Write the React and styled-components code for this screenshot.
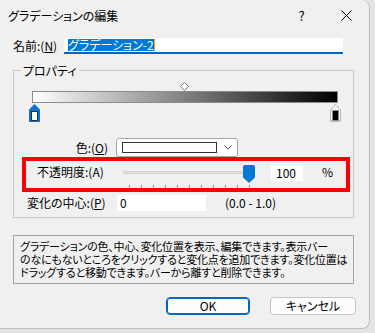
import React from "react";
import styled, { createGlobalStyle } from "styled-components";

const GlobalStyle = createGlobalStyle`
  html, body { margin: 0; padding: 0; background: #e4e4e4; }
  body {
    font-family: "Noto Sans CJK JP", "Noto Sans", sans-serif;
    font-size: 12px;
    color: #000;
  }
  * { box-sizing: border-box; }
`;

const Window = styled.div`
  width: 370px;
  height: 329px;
  background: #f0f0f0;
  border-right: 1px solid #bdbdbd;
  border-bottom: 1px solid #bdbdbd;
  border-radius: 0 8px 8px 0;
  display: flex;
  flex-direction: column;
  font-feature-settings: "palt";
  line-height: 14px;
`;

const TitleBar = styled.div`
  height: 31px;
  display: flex;
  align-items: center;
  padding-left: 8px;
`;

const TitleText = styled.div`
  flex: 1;
  font-size: 12px;
`;

const CaptionButton = styled.div`
  width: 45px;
  height: 31px;
  display: flex;
  align-items: center;
  justify-content: center;
  font-size: 13px;
`;

const Body = styled.div`
  display: flex;
  flex-direction: column;
  padding: 0 15px 0 13px;
`;

const NameRow = styled.div`
  margin-top: 7px;
  height: 16px;
  display: flex;
  align-items: center;
`;

const Label = styled.div`
  width: ${(p) => p.$w || "auto"};
  margin-left: ${(p) => p.$ml || "0px"};
  text-align: ${(p) => (p.$right ? "right" : "left")};
  white-space: nowrap;
`;

const Key = styled.span`
  text-decoration: underline;
  text-underline-offset: 1px;
`;

const NameInput = styled.div`
  width: 279px;
  height: 16px;
  background: #fff;
  border-bottom: 2px solid #0067c0;
  padding-left: 4px;
  display: flex;
  align-items: center;
`;

const Selection = styled.span`
  background: #0078d7;
  color: #fff;
  line-height: 12px;
  white-space: nowrap;
`;

const Caret = styled.span`
  width: 1px;
  height: 12px;
  background: #f7941d;
`;

const GroupBox = styled.div`
  position: relative;
  margin-top: 16px;
  height: 148px;
  border: 1px solid #c9c9c9;
  display: flex;
  flex-direction: column;
`;

const Legend = styled.div`
  position: absolute;
  top: -7px;
  left: 7px;
  padding: 0 2px;
  background: #f0f0f0;
  line-height: 14px;
`;

const GradientArea = styled.div`
  margin: 11px 0 0 18px;
  width: 306px;
  display: flex;
  flex-direction: column;
`;

const Diamond = styled.svg`
  display: block;
  margin-left: 148px;
`;

const GradientBar = styled.div`
  height: 12px;
  border: 1px solid #8c8c8c;
  background: linear-gradient(to right, #ffffff, #000000);
`;

const StopsRow = styled.div`
  margin: 1px -3px 0;
  height: 18px;
  display: flex;
  justify-content: space-between;
`;

const ColorRow = styled.div`
  margin-top: 16px;
  height: 19px;
  display: flex;
  align-items: center;
`;

const Combo = styled.div`
  margin-left: 8px;
  width: 122px;
  height: 19px;
  background: #fff;
  border: 1px solid #a6a6a6;
  border-radius: 3px;
  display: flex;
  align-items: center;
  padding: 0 5px;
`;

const Swatch = styled.div`
  width: 95px;
  height: 11px;
  background: #fff;
  border: 1px solid #333;
`;

const Chevron = styled.svg`
  margin-left: auto;
  display: block;
`;

const Highlight = styled.div`
  margin-left: 8px;
  width: 328px;
  height: 35px;
  border: 4px solid #ff0000;
  display: flex;
  align-items: flex-start;
`;

const HLabel = styled.div`
  margin: 4px 0 0 11px;
  width: 86px;
  white-space: nowrap;
`;

const Slider = styled.div`
  position: relative;
  width: 132px;
  height: 27px;
`;

const Track = styled.div`
  position: absolute;
  left: 0;
  right: 5px;
  top: 10px;
  height: 3px;
  background: #e6e6e6;
  border: 1px solid #d2d2d2;
`;

const Ticks = styled.div`
  position: absolute;
  left: 6px;
  top: 24px;
  width: 121px;
  height: 3px;
  display: flex;
  justify-content: space-between;
`;

const Tick = styled.div`
  width: 1px;
  height: 3px;
  background: #9a9a9a;
`;

const Thumb = styled.svg`
  position: absolute;
  left: 120px;
  top: 4px;
  display: block;
`;

const TextBox = styled.div`
  width: ${(p) => p.$w};
  height: 16px;
  margin-left: ${(p) => p.$ml || "0px"};
  margin-top: ${(p) => p.$mt || "0px"};
  background: #fff;
  padding-left: ${(p) => p.$pl || "3px"};
  display: flex;
  align-items: center;
`;

const Unit = styled.div`
  margin: 4px 0 0 19px;
`;

const CenterRow = styled.div`
  margin-top: 3px;
  height: 16px;
  display: flex;
  align-items: center;
`;

const RangeText = styled.div`
  margin-left: 19px;
  white-space: nowrap;
`;

const DescBox = styled.div`
  margin-top: 17px;
  height: 49px;
  border: 1px solid #a3a3a3;
  padding: 4px 6px;
  font-size: 11px;
  letter-spacing: -0.2px;
  line-height: 13px;
  white-space: nowrap;
  overflow: hidden;
`;

const ButtonRow = styled.div`
  margin: 13px -2px 0 0;
  display: flex;
  justify-content: flex-end;
  gap: 20px;
`;

const Button = styled.div`
  width: ${(p) => p.$w};
  height: 18px;
  border-radius: 4px;
  background: #fdfdfd;
  border: 1px solid ${(p) => (p.$primary ? "#0067c0" : "#c4c4c4")};
  box-shadow: ${(p) => (p.$primary ? "inset 0 0 0 1px #0067c0" : "none")};
  display: flex;
  align-items: center;
  justify-content: center;
`;

const LeftStop = () => (
  <svg width="11" height="18" viewBox="0 0 11 18">
    <path d="M5.5 0 L11 5.5 V18 H0 V5.5 Z" fill="#0a74d6" />
    <rect x="2.5" y="7.5" width="6" height="9" fill="#fff" stroke="#2b2b2b" />
  </svg>
);

const RightStop = () => (
  <svg width="11" height="18" viewBox="0 0 11 18">
    <path d="M5.5 0.5 L10.5 5.5 V17.5 H0.5 V5.5 Z" fill="#eeeeee" stroke="#8a8a8a" strokeDasharray="1 1" />
    <rect x="2.5" y="6.5" width="6" height="10" fill="#000" stroke="#8a8a8a" />
  </svg>
);

export default function App() {
  const ticks = Array.from({ length: 11 }, (_, i) => i);
  return (
    <>
      <GlobalStyle />
      <Window>
        <TitleBar>
          <TitleText>グラデーションの編集</TitleText>
          <CaptionButton>?</CaptionButton>
          <CaptionButton>
            <svg width="11" height="11" viewBox="0 0 11 11">
              <path d="M0.5 0.5 L10.5 10.5 M10.5 0.5 L0.5 10.5" stroke="#000" strokeWidth="1" />
            </svg>
          </CaptionButton>
        </TitleBar>
        <Body>
          <NameRow>
            <Label $w="51px">
              名前:(<Key>N</Key>)
            </Label>
            <NameInput>
              <Selection>グラデーション-2</Selection>
              <Caret />
            </NameInput>
          </NameRow>

          <GroupBox>
            <Legend>プロパティ</Legend>
            <GradientArea>
              <Diamond width="9" height="9" viewBox="0 0 9 9">
                <path d="M4.5 0.5 L8.5 4.5 L4.5 8.5 L0.5 4.5 Z" fill="#fff" stroke="#7a7a7a" />
              </Diamond>
              <GradientBar />
              <StopsRow>
                <LeftStop />
                <RightStop />
              </StopsRow>
            </GradientArea>

            <ColorRow>
              <Label $w="94px" $right>
                色:(<Key>O</Key>)
              </Label>
              <Combo>
                <Swatch />
                <Chevron width="8" height="5" viewBox="0 0 8 5">
                  <path d="M0.5 0.5 L4 4 L7.5 0.5" fill="none" stroke="#555" />
                </Chevron>
              </Combo>
            </ColorRow>

            <Highlight>
              <HLabel>不透明度:(A)</HLabel>
              <Slider>
                <Track />
                <Ticks>
                  {ticks.map((t) => (
                    <Tick key={t} />
                  ))}
                </Ticks>
                <Thumb width="12" height="18" viewBox="0 0 12 18">
                  <path d="M2 0 H10 Q12 0 12 2 V12.5 L6 18 L0 12.5 V2 Q0 0 2 0 Z" fill="#0078d4" />
                </Thumb>
              </Slider>
              <TextBox $w="32px" $ml="16px" $mt="4px" $pl="5px">100</TextBox>
              <Unit>%</Unit>
            </Highlight>

            <CenterRow>
              <Label $w="90px" $ml="13px">
                変化の中心:(<Key>P</Key>)
              </Label>
              <TextBox $w="89px">0</TextBox>
              <RangeText>(0.0 - 1.0)</RangeText>
            </CenterRow>
          </GroupBox>

          <DescBox>
            グラデーションの色、中心、変化位置を表示、編集できます。表示バー
            <br />
            のなにもないところをクリックすると変化点を追加できます。変化位置は
            <br />
            ドラッグすると移動できます。バーから離すと削除できます。
          </DescBox>

          <ButtonRow>
            <Button $w="84px" $primary>
              OK
            </Button>
            <Button $w="86px">キャンセル</Button>
          </ButtonRow>
        </Body>
      </Window>
    </>
  );
}
